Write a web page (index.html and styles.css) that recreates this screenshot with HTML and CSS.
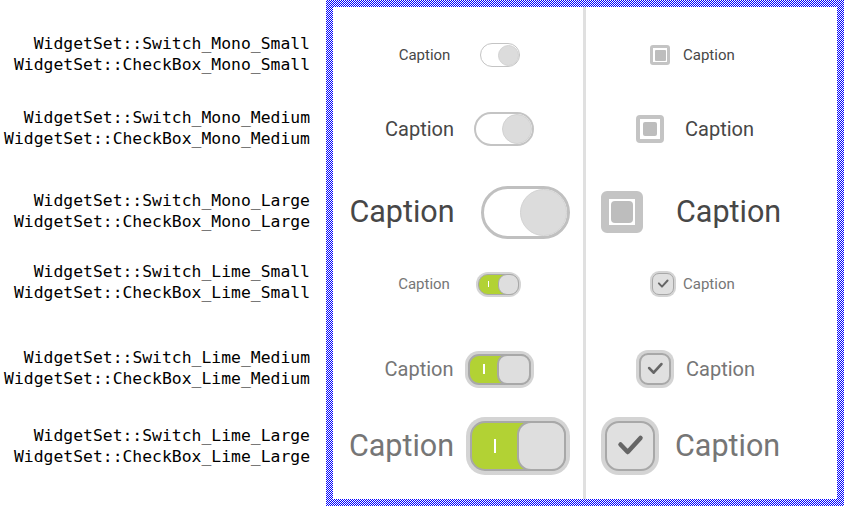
FILE: index.html
```html
<!DOCTYPE html>
<html>
<head>
<meta charset="utf-8">
<link rel="stylesheet" href="styles.css">
</head>
<body>
<div class="page">
  <div class="labels">
    <div class="row r1"><div class="lbl">WidgetSet::Switch_Mono_Small<br>WidgetSet::CheckBox_Mono_Small</div></div>
    <div class="row r2"><div class="lbl">WidgetSet::Switch_Mono_Medium<br>WidgetSet::CheckBox_Mono_Medium</div></div>
    <div class="row r3"><div class="lbl">WidgetSet::Switch_Mono_Large<br>WidgetSet::CheckBox_Mono_Large</div></div>
    <div class="row r4"><div class="lbl">WidgetSet::Switch_Lime_Small<br>WidgetSet::CheckBox_Lime_Small</div></div>
    <div class="row r5"><div class="lbl">WidgetSet::Switch_Lime_Medium<br>WidgetSet::CheckBox_Lime_Medium</div></div>
    <div class="row r6"><div class="lbl">WidgetSet::Switch_Lime_Large<br>WidgetSet::CheckBox_Lime_Large</div></div>
  </div>
  <div class="panel">
    <div class="inner">
      <div class="col sw-col">
        <div class="row r1 sw-row g-ms"><span class="cap cap-s mono">Caption</span><div class="msw msw-s"><div class="mknob"></div></div></div>
        <div class="row r2 sw-row g-mm"><span class="cap cap-m mono">Caption</span><div class="msw msw-m"><div class="mknob"></div></div></div>
        <div class="row r3 sw-row g-ml"><span class="cap cap-l mono">Caption</span><div class="msw msw-l"><div class="mknob"></div></div></div>
        <div class="row r4 sw-row g-ls"><span class="cap cap-s lime">Caption</span><div class="lsw lsw-s"><div class="track"><div class="on"><div class="mark"></div></div><div class="lknob"></div></div></div></div>
        <div class="row r5 sw-row g-lm"><span class="cap cap-m lime">Caption</span><div class="lsw lsw-m"><div class="track"><div class="on"><div class="mark"></div></div><div class="lknob"></div></div></div></div>
        <div class="row r6 sw-row g-ll"><span class="cap cap-l lime">Caption</span><div class="lsw lsw-l"><div class="track"><div class="on"><div class="mark"></div></div><div class="lknob"></div></div></div></div>
      </div>
      <div class="divider"></div>
      <div class="col cb-col">
        <div class="row r1 cb-row p-s c-ms"><div class="mcb mcb-s"><div class="fill"></div></div><span class="cap cap-s mono">Caption</span></div>
        <div class="row r2 cb-row p-m c-mm"><div class="mcb mcb-m"><div class="fill"></div></div><span class="cap cap-m mono">Caption</span></div>
        <div class="row r3 cb-row p-l c-ml"><div class="mcb mcb-l"><div class="fill"></div></div><span class="cap cap-l mono">Caption</span></div>
        <div class="row r4 cb-row p-s c-ls"><div class="lcb lcb-s"><div class="box"><svg viewBox="2 2 46 46"><polyline points="15.5,23.5 22.7,31 35.5,17"/></svg></div></div><span class="cap cap-s lime">Caption</span></div>
        <div class="row r5 cb-row p-m c-lm"><div class="lcb lcb-m"><div class="box"><svg viewBox="2 2 46 46"><polyline points="15.5,23.5 22.7,31 35.5,17"/></svg></div></div><span class="cap cap-m lime">Caption</span></div>
        <div class="row r6 cb-row p-l c-ll"><div class="lcb lcb-l"><div class="box"><svg viewBox="2 2 46 46"><polyline points="15.5,23.5 22.7,31 35.5,17"/></svg></div></div><span class="cap cap-l lime">Caption</span></div>
      </div>
    </div>
  </div>
</div>
</body>
</html>
```
FILE: styles.css
```css
html, body {
  margin: 0;
  padding: 0;
  background: #ffffff;
}
.page {
  display: flex;
  width: 844px;
  height: 506px;
}
.labels {
  width: 326px;
  box-sizing: border-box;
  padding: 7px 16px 0 0;
  display: flex;
  flex-direction: column;
}
.row {
  height: 60px;
  flex-shrink: 0;
  display: flex;
  align-items: center;
}
.r1 { margin-top: 18px; }
.r2 { margin-top: 14px; }
.r3 { margin-top: 23px; }
.r4 { margin-top: 12px; }
.r5 { margin-top: 25px; }
.r6 { margin-top: 17px; }
.labels .row { justify-content: flex-end; }
.labels .r1 { margin-top: 17px; }
.labels .r4 { margin-top: 11px; }
.labels .r5 { margin-top: 26px; }
.labels .r6 { margin-top: 18px; }
.lbl {
  font-family: "DejaVu Sans Mono", "Liberation Mono", monospace;
  font-size: 16.4px;
  line-height: 21px;
  color: #000;
  text-align: right;
  white-space: nowrap;
}
.panel {
  width: 518px;
  height: 506px;
  box-sizing: border-box;
  padding: 7px;
  background: repeating-conic-gradient(#0000ff 0 25%, #ffffff 0 50%) 0 0 / 2px 2px;
}
.inner {
  background: #fff;
  width: 100%;
  height: 100%;
  display: flex;
}
.col {
  display: flex;
  flex-direction: column;
}
.sw-col {
  width: 250px;
  box-sizing: border-box;
  padding-left: 3px;
}
.divider {
  width: 3px;
  background: #e0e0e0;
}
.cb-col {
  flex: 1;
}
.sw-row { justify-content: center; }
.cb-row { justify-content: flex-start; }

.cap {
  font-family: Roboto, "Noto Sans", sans-serif;
  white-space: nowrap;
  line-height: 1;
}
.cap-s { font-size: 15px; }
.cap-m { font-size: 20px; }
.cap-l { font-size: 30.5px; }
.mono { color: #474747; }
.lime { color: #767676; }

.g-ms { gap: 30px; }
.g-mm { gap: 20px; }
.g-ml { gap: 26px; }
.g-ls { gap: 26px; }
.g-lm { gap: 12px; }
.g-ll { gap: 12px; }

.p-s { padding-left: 64px; }
.p-m { padding-left: 50px; }
.p-l { padding-left: 15px; }
.c-ms { gap: 13px; }
.c-mm { gap: 21px; }
.c-ml { gap: 33px; }
.c-ls { gap: 7px; }
.c-lm { gap: 12px; }
.c-ll { gap: 16px; }

/* mono switch */
.msw {
  box-sizing: border-box;
  border-style: solid;
  border-color: #c4c4c4;
  border-radius: 999px;
  background: #fff;
  display: flex;
  justify-content: flex-end;
  align-items: center;
  flex-shrink: 0;
}
.mknob {
  box-sizing: border-box;
  border-radius: 50%;
  background: #dcdcdc;
  border: 1px solid #d2d2d2;
}
.msw-s { width: 40px; height: 24px; border-width: 1px; }
.msw-s .mknob { width: 21px; height: 21px; }
.msw-m { width: 60px; height: 34px; border-width: 2px; }
.msw-m .mknob { width: 30px; height: 30px; }
.msw-l { width: 89px; height: 53px; border-width: 3px; border-color: #c0c0c0; }
.msw-l .mknob { width: 47px; height: 47px; }

/* lime switch */
.lsw {
  box-sizing: border-box;
  background: #d4d4d4;
  display: flex;
  flex-shrink: 0;
}
.lsw .track {
  flex: 1;
  display: flex;
  border-style: solid;
  border-color: #a8a8a8;
  background: #b2d234;
}
.lsw .on {
  flex: 1;
  display: flex;
  align-items: center;
  justify-content: center;
}
.lsw .mark { background: #fff; }
.lsw .lknob {
  box-sizing: border-box;
  background: #dedede;
  border-style: solid;
  border-color: #a8a8a8;
}
.lsw-s { width: 45px; height: 25px; padding: 2px; border-radius: 12px; }
.lsw-s .track { border-width: 1px; border-radius: 10px; }
.lsw-s .lknob { width: 21px; margin: -1px -1px -1px 0; border-width: 1px; border-radius: 9px; }
.lsw-s .mark { width: 1px; height: 6px; }
.lsw-m { width: 69px; height: 37px; padding: 3px; border-radius: 14px; }
.lsw-m .track { border-width: 2px; border-radius: 11px; }
.lsw-m .lknob { width: 34px; margin: -2px -2px -2px 0; border-width: 2px; border-radius: 10px; }
.lsw-m .mark { width: 2px; height: 10px; }
.lsw-l { width: 104px; height: 58px; padding: 4px; border-radius: 19px; }
.lsw-l .track { border-width: 2px; border-radius: 15px; }
.lsw-l .lknob { width: 49px; margin: -2px -2px -2px 0; border-width: 2px; border-radius: 14px; }
.lsw-l .mark { width: 2px; height: 14px; }

/* mono checkbox */
.mcb {
  box-sizing: border-box;
  border-style: solid;
  border-color: #c4c4c4;
  background: #fff;
  display: flex;
  align-items: center;
  justify-content: center;
  flex-shrink: 0;
}
.mcb .fill { background: #bdbdbd; }
.mcb-s { width: 20px; height: 20px; border-width: 3px; border-radius: 3px; }
.mcb-s .fill { width: 11px; height: 11px; border-radius: 1px; }
.mcb-m { width: 28px; height: 28px; border-width: 4px; border-radius: 4px; }
.mcb-m .fill { width: 14px; height: 14px; border-radius: 2px; }
.mcb-l { width: 42px; height: 42px; border-width: 8px; border-radius: 6px; }
.mcb-l .fill { width: 22px; height: 22px; border-radius: 4px; }

/* lime checkbox */
.lcb {
  box-sizing: border-box;
  background: #d4d4d4;
  display: flex;
  flex-shrink: 0;
}
.lcb .box {
  flex: 1;
  box-sizing: border-box;
  border-style: solid;
  border-color: #a8a8a8;
  background: #e0e0e0;
  display: flex;
}
.lcb svg {
  width: 100%;
  height: 100%;
  display: block;
}
.lcb polyline {
  fill: none;
  stroke: #666666;
  stroke-width: 4.5;
  stroke-linecap: round;
  stroke-linejoin: round;
}
.lcb-s { width: 26px; height: 26px; padding: 2px; border-radius: 9px; }
.lcb-s .box { border-width: 1px; border-radius: 7px; }
.lcb-m { width: 38px; height: 38px; padding: 3px; border-radius: 12px; }
.lcb-m .box { border-width: 2px; border-radius: 9px; }
.lcb-l { width: 58px; height: 58px; padding: 4px; border-radius: 18px; }
.lcb-l .box { border-width: 2px; border-radius: 14px; }
```
